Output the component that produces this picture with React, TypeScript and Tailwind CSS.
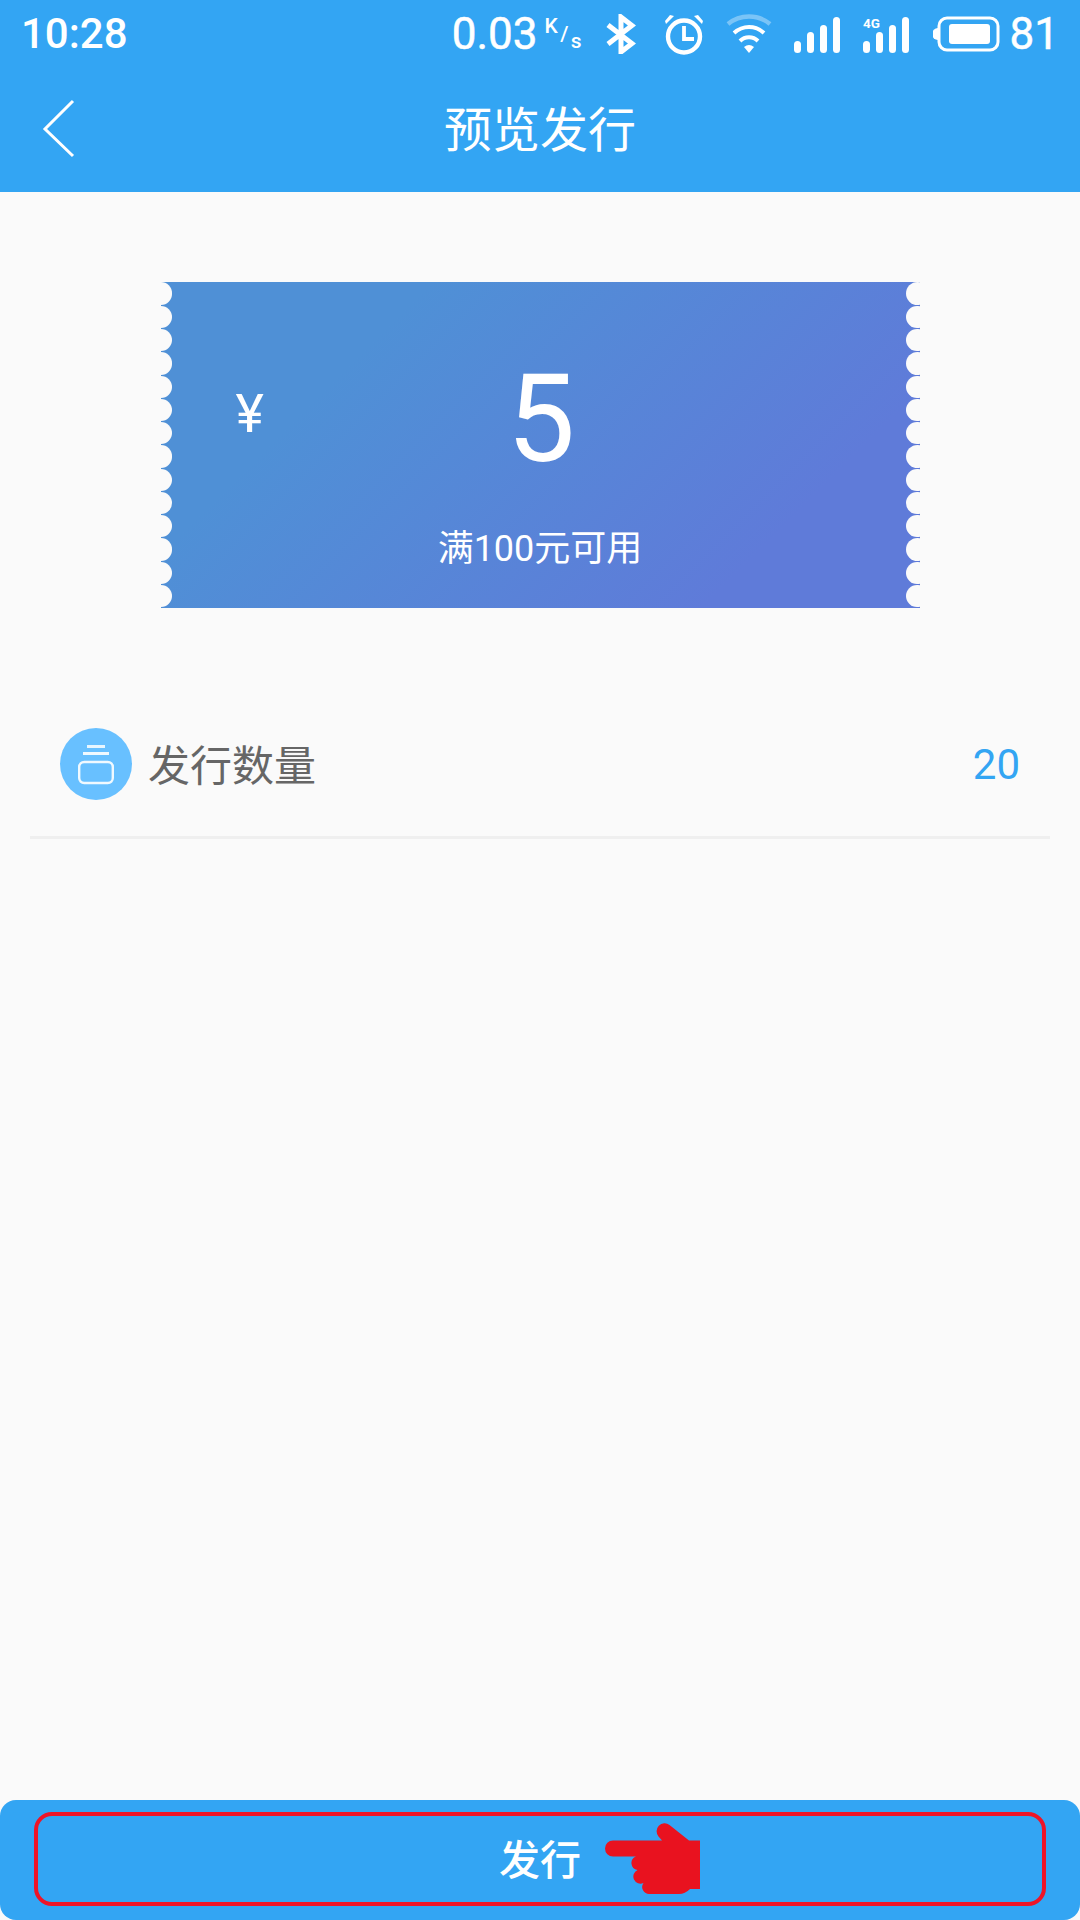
const cjk = '[font-family:Roboto,"Noto_Sans_CJK_SC",sans-serif]';

function Bluetooth() {
  return (
    <svg width="30" height="40" viewBox="0 0 30 40" className="ml-[24px]">
      <path d="M2 11 L26 29.5 L15 38 V3 L26 11.5 L2 30" fill="none" stroke="white" strokeWidth="5" />
    </svg>
  );
}

function Alarm() {
  return (
    <svg width="40" height="42" viewBox="0 0 40 42" className="ml-[28px]">
      <circle cx="20" cy="23.5" r="16" fill="none" stroke="white" strokeWidth="4.4" />
      <path d="M20 13 V26 H30" fill="none" stroke="white" strokeWidth="3.8" />
      <path d="M1 8 L6 2 L10 3 L2 11 Z M39 8 L34 2 L30 3 L38 11 Z" fill="white" />
    </svg>
  );
}

function Wifi() {
  return (
    <svg width="46" height="40" viewBox="0 0 46 40" className="ml-[22px]">
      <path d="M2 10 C14 0 32 0 44 10" fill="none" stroke="white" strokeOpacity="0.35" strokeWidth="4.4" />
      <path d="M8 19 C17 11 29 11 38 19" fill="none" stroke="white" strokeWidth="4" />
      <path d="M14 27 C19 22 27 22 32 27" fill="none" stroke="white" strokeWidth="4" />
      <path d="M18 33 Q23 29 28 33 L23 39 Z" fill="white" />
    </svg>
  );
}

function Signal({ tag, className }: { tag?: boolean; className: string }) {
  return (
    <svg width="46" height="38" viewBox="0 0 46 38" className={className}>
      <rect x="0" y="26" width="7" height="12" rx="3.5" fill="white" />
      <rect x="13" y="17" width="7" height="21" rx="3.5" fill="white" />
      <rect x="26" y="10" width="7" height="28" rx="3.5" fill="white" />
      <rect x="39" y="2" width="7" height="36" rx="3.5" fill="white" />
      {tag && (
        <text x="0" y="13" fontSize="13.5" fontWeight="700" fill="white" fontFamily="Roboto, sans-serif">
          4G
        </text>
      )}
    </svg>
  );
}

function Battery() {
  return (
    <svg width="67" height="36" viewBox="0 0 67 36" className="ml-[24px]">
      <path d="M5 12 A6 6 0 0 0 5 24 Z" fill="white" />
      <rect x="6" y="2" width="59" height="32" rx="8" fill="none" stroke="white" strokeWidth="3" />
      <rect x="16" y="8" width="41" height="20" rx="3" fill="white" />
    </svg>
  );
}

function StatusBar() {
  return (
    <div className="flex h-[64px] items-center pl-[21px] pr-[21px] pt-[4px] text-white font-['Roboto',sans-serif]">
      <span className="text-[42px] font-medium leading-none">10:28</span>
      <div className="ml-auto flex items-center">
        <span className="text-[44px] leading-none [-webkit-text-stroke:0.5px_white]">0.03</span>
        <span className="ml-[7px] flex h-[36px] w-[37px] items-start justify-between text-[21px] font-medium leading-none">
          <span>K</span>
          <span className="self-center">/</span>
          <span className="self-end">s</span>
        </span>
        <Bluetooth />
        <Alarm />
        <Wifi />
        <Signal className="ml-[22px]" />
        <Signal tag className="ml-[23px]" />
        <Battery />
        <span className="ml-[10px] text-[44px] leading-none [-webkit-text-stroke:0.5px_white]">81</span>
      </div>
    </div>
  );
}

function Ticket() {
  const scallops = Array.from({ length: 14 }, (_, i) => i);
  return (
    <div className="relative mx-auto flex h-[326px] w-[759px] flex-col items-center overflow-hidden bg-[linear-gradient(135deg,#4f90d6_25%,#5f7bd9_80%)] text-white">
      <div className="absolute -left-[10.6px] top-0 flex flex-col">
        {scallops.map((i) => (
          <span key={i} className="my-[0.45px] h-[22.4px] w-[22.4px] rounded-full bg-[#fafafa]" />
        ))}
      </div>
      <div className="absolute -right-[9.2px] top-0 flex flex-col">
        {scallops.map((i) => (
          <span key={i} className="my-[0.45px] h-[22.4px] w-[22.4px] rounded-full bg-[#fafafa]" />
        ))}
      </div>
      <span className={`absolute left-[75px] top-[105px] text-[54px] leading-none ${cjk}`}>¥</span>
      <span className="mt-[77px] pl-[2px] font-['Roboto',sans-serif] text-[122px] leading-none">5</span>
      <span className={`mt-[44px] text-[36px] leading-[48px] ${cjk}`}>满100元可用</span>
    </div>
  );
}

function QuantityRow() {
  return (
    <div className="mx-[30px] mt-[120px] flex h-[111px] items-start border-b-[3px] border-[#efefef] pl-[30px] pr-[30px]">
      <div className="flex h-[72px] w-[72px] shrink-0 items-center justify-center rounded-full bg-[#68c0ff]">
        <svg width="40" height="44" viewBox="0 0 40 44">
          <rect x="11" y="3" width="18" height="3" fill="white" fillOpacity="0.85" />
          <rect x="7" y="10" width="26" height="3" fill="white" fillOpacity="0.9" />
          <rect x="3.2" y="20" width="33.6" height="21" rx="5" fill="none" stroke="white" strokeOpacity="0.9" strokeWidth="2.4" />
        </svg>
      </div>
      <span className={`ml-[16px] mt-[13px] text-[42px] leading-[52px] text-[#666666] ${cjk}`}>发行数量</span>
      <span className="ml-auto mt-[13px] font-['Roboto',sans-serif] text-[42px] leading-[48px] text-[#33a5f3]">20</span>
    </div>
  );
}

function PointingHand() {
  return (
    <svg width="96" height="73" viewBox="0 0 96 73" className="absolute left-[567px] top-[7px]">
      <path
        d="M0 25.5 A8 8 0 0 1 8 17.5 H57 L53.5 13.5 A8 8 0 0 1 64.5 2 L84 17.5 H95 V66 H85 Q80 71 74 71 H45 A7 7 0 0 1 38.5 60 A7 7 0 0 1 32.5 47 A7 7 0 0 1 31 33.5 H8 A8 8 0 0 1 0 25.5 Z"
        fill="#e9121f"
      />
    </svg>
  );
}

export default function App() {
  return (
    <div className="flex h-[1920px] w-[1080px] flex-col overflow-hidden bg-[#fafafa]">
      <header className="h-[192px] shrink-0 bg-[#33a5f3]">
        <StatusBar />
        <div className="relative flex h-[128px] items-center justify-center">
          <svg width="34" height="60" viewBox="0 0 34 60" className="absolute left-[42px] top-[35px]">
            <path d="M31 2 L3 30 L31 57" fill="none" stroke="white" strokeWidth="3" />
          </svg>
          <h1 className={`mt-[6px] text-[48px] font-normal leading-none text-white ${cjk}`}>预览发行</h1>
        </div>
      </header>
      <main className="flex-1 pt-[90px]">
        <Ticket />
        <QuantityRow />
      </main>
      <footer className="h-[120px] shrink-0 rounded-[16px] bg-[#33a5f3] pl-[34px] pr-[34px] pt-[12px]">
        <div className="relative flex h-[94px] items-center justify-center rounded-[18px] border-[4px] border-[#ee1427]">
          <span className={`mt-[4px] text-[41px] font-medium leading-none text-white ${cjk}`}>发行</span>
          <PointingHand />
        </div>
      </footer>
    </div>
  );
}
